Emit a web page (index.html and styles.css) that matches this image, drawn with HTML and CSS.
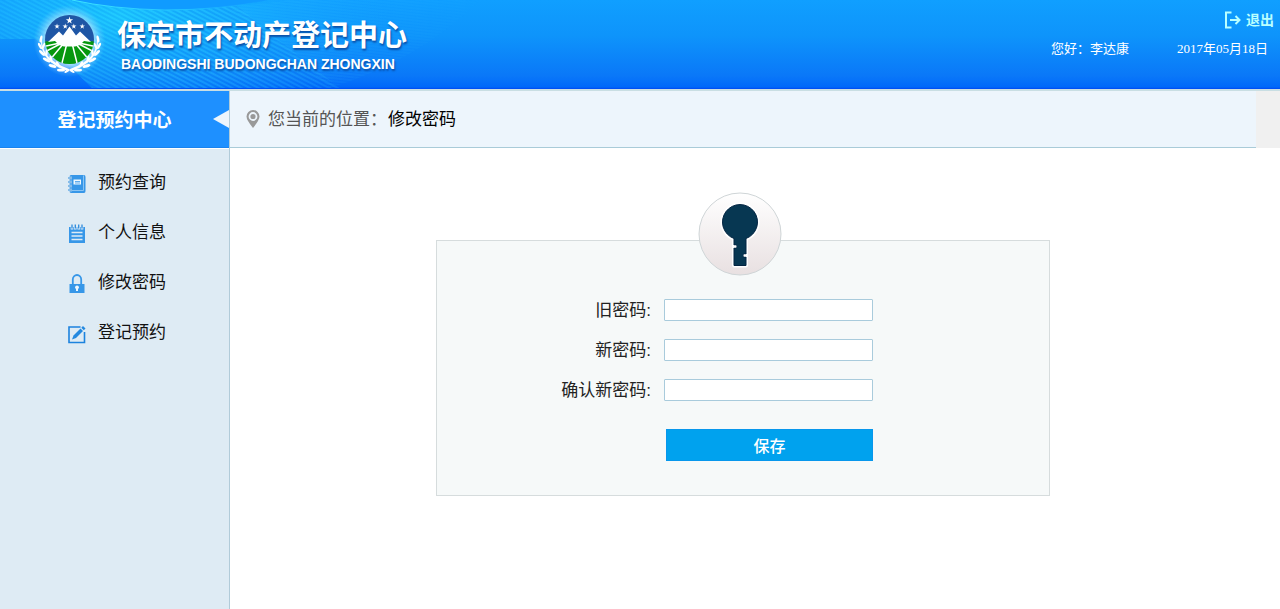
FILE: index.html
```html
<!DOCTYPE html>
<html lang="zh-CN">
<head>
<meta charset="utf-8">
<meta name="viewport" content="width=device-width, initial-scale=1">
<title>修改密码 - 保定市不动产登记中心</title>
<link rel="stylesheet" href="styles.css">
</head>
<body>
<header class="header">
  <svg class="header-art" width="520" height="88" viewBox="0 0 520 88" aria-hidden="true">
    <defs>
      <radialGradient id="glow" gradientUnits="userSpaceOnUse" cx="120" cy="30" r="270" gradientTransform="translate(0 4) scale(1 .42)">
        <stop offset="0" stop-color="#20d8ff" stop-opacity=".8"/>
        <stop offset=".5" stop-color="#18b4ff" stop-opacity=".5"/>
        <stop offset="1" stop-color="#18a0ff" stop-opacity="0"/>
      </radialGradient>
      <linearGradient id="fade" x1="0" x2="1" y1="0" y2="0">
        <stop offset="0" stop-color="#fff" stop-opacity=".5"/>
        <stop offset=".35" stop-color="#fff"/>
        <stop offset=".6" stop-color="#fff" stop-opacity=".7"/>
        <stop offset="1" stop-color="#fff" stop-opacity="0"/>
      </linearGradient>
      <linearGradient id="rim" x1="0" x2="1" y1="0" y2="0">
        <stop offset="0" stop-color="#3de4ff"/>
        <stop offset=".6" stop-color="#20c0ff"/>
        <stop offset="1" stop-color="#18a8ff" stop-opacity="0"/>
      </linearGradient>
      <pattern id="waves" width="8" height="4" patternUnits="userSpaceOnUse" patternTransform="rotate(27)">
        <path d="M0 1H8" stroke="#32d0ff" stroke-width="1" opacity=".5"/>
        <path d="M0 3H8" stroke="#0057e8" stroke-width="1" opacity=".3"/>
      </pattern>
      <pattern id="ripples" width="8" height="3" patternUnits="userSpaceOnUse" patternTransform="rotate(6)">
        <path d="M0 1H8" stroke="#32c8ff" stroke-width="1" opacity=".3"/>
      </pattern>
      <mask id="sweep"><rect width="520" height="88" fill="url(#fade)"/></mask>
    </defs>
    <path d="M0 0H480Q420 60 330 88H92Q60 56 35 39H0Z" fill="url(#glow)"/>
    <g mask="url(#sweep)">
      <path d="M0 0H230Q290 50 340 88H92Q60 56 35 39H0Z" fill="url(#waves)"/>
      <path d="M150 8Q240 8 290 0H480Q420 60 330 88Q290 50 230 8Z" fill="url(#ripples)"/>
    </g>
    <path d="M72 0Q112 9 165 10Q220 10 268 0Z" fill="#109bff"/>
    <path d="M72 0Q112 9 165 10Q220 10 268 0" fill="none" stroke="url(#rim)"/>
  </svg>
  <div class="brand">
    <svg class="logo" width="72" height="72" viewBox="0 0 72 72" role="img" aria-label="徽标">
      <defs>
        <clipPath id="disc"><circle cx="35.500" cy="34.500" r="24.500"/></clipPath>
        <radialGradient id="halo">
          <stop offset=".65" stop-color="#fff" stop-opacity=".6"/>
          <stop offset="1" stop-color="#8ae0ff" stop-opacity="0"/>
        </radialGradient>
      </defs>
      <circle cx="35.500" cy="36" r="36" fill="url(#halo)"/>
      <g clip-path="url(#disc)">
        <path d="M8 8H64V40H8Z" fill="#1f56a5"/>
        <path d="M8 37Q35 33 64 37V62H8Z" fill="#06970e"/>
        <g stroke="#fff" stroke-width="1.500" fill="none">
          <path d="M26 38L8 42M28 38L9 48M30 38L15 56M33 38L27 62M38 38L44 62M41 38L56 56M43 38L62 48M45 38L63 42"/>
        </g>
        <path d="M14 37L25 26.500L29 30.500L35.500 21.500L42 30.500L46 26.500L57 37L50 36L46 40L41 41.500H30L25 40L21 36Z" fill="#fff"/>
      </g>
      <g fill="#fff">
        <path id="star" d="M35.500 11.500L36.300 14.200H39.100L36.900 15.900L37.700 18.500L35.500 16.900L33.300 18.500L34.100 15.900L31.900 14.200H34.700Z"/>
        <use href="#star" transform="translate(-3.600 9.800) scale(.75)"/>
        <use href="#star" transform="translate(4.600 9.800) scale(.75)"/>
        <use href="#star" transform="translate(13.200 9.800) scale(.75)"/>
        <use href="#star" transform="translate(21.600 9.800) scale(.75)"/>
      </g>
      <g id="branch" fill="#fff">
        <path d="M8 34Q7 54 35 64L34 66Q6 57 7 34Z"/>
        <ellipse cx="7" cy="34" rx="1.300" ry="3.500" transform="rotate(12 7 34)"/>
        <ellipse cx="6" cy="41" rx="1.300" ry="3.500" transform="rotate(-28 6 41)"/>
        <ellipse cx="9.500" cy="41" rx="1.100" ry="3.500" transform="rotate(22 9.500 41)"/>
        <ellipse cx="8" cy="48" rx="1.500" ry="3.800" transform="rotate(-46 8 48)"/>
        <ellipse cx="12.500" cy="48" rx="1.200" ry="3.500" transform="rotate(5 12.500 48)"/>
        <ellipse cx="12.500" cy="55" rx="1.500" ry="4" transform="rotate(-62 12.500 55)"/>
        <ellipse cx="17" cy="54" rx="1.300" ry="3.500" transform="rotate(-12 17 54)"/>
        <ellipse cx="18.500" cy="61" rx="1.500" ry="4" transform="rotate(-75 18.500 61)"/>
        <ellipse cx="24" cy="59.500" rx="1.300" ry="3.500" transform="rotate(-26 24 59.500)"/>
        <ellipse cx="27" cy="65" rx="1.500" ry="4" transform="rotate(-90 27 65)"/>
        <ellipse cx="33" cy="66" rx="1.200" ry="3" transform="rotate(60 33 66)"/>
      </g>
      <use href="#branch" transform="translate(71 0) scale(-1 1)"/>
    </svg>
    <div class="brand-text">
      <h1 class="brand-name">保定市不动产登记中心</h1>
      <p class="brand-latin">BAODINGSHI BUDONGCHAN ZHONGXIN</p>
    </div>
  </div>
  <div class="account">
    <a class="logout" href="#">
      <svg width="17" height="18" viewBox="0 0 17 18" fill="none" stroke="#b9ffff" stroke-width="2" aria-hidden="true">
        <path d="M7.500 1.500H2V16.500H7.500M6 9H15M11.500 5L15.500 9L11.500 13"/>
      </svg>
      <span>退出</span>
    </a>
    <div class="account-info">
      <span>您好：李达康</span>
      <time datetime="2017-05-18">2017年05月18日</time>
    </div>
  </div>
</header>
<div class="layout">
  <aside class="sidebar">
    <h2 class="sidebar-title">登记预约中心
      <svg class="sidebar-arrow" width="16" height="18" viewBox="0 0 16 18" aria-hidden="true"><path d="M0 9L16 0V18Z" fill="#edf5fc"/></svg>
    </h2>
    <nav class="menu">
      <a class="menu-item" href="#">
        <svg class="menu-icon" width="18" height="20" viewBox="0 0 18 20" aria-hidden="true">
          <path d="M3 1H16Q17.500 1 17.500 3V17Q17.500 19 16 19H3Q1.500 19 1.500 17V3Q1.500 1 3 1Z" fill="#3797e8"/>
          <path d="M15.500 1.500V16.500H3" fill="none" stroke="#8ac4f3"/>
          <path d="M0 4H4M0 8H4M0 12H4M0 16H4" stroke="#deebf5" stroke-width="2.600"/>
          <path d="M0 4H4M0 8H4M0 12H4M0 16H4" stroke="#2d8bdc" stroke-width="1.200"/>
          <path d="M5.500 5.500H13V10.500H5.500Z" fill="#eef8ff"/>
          <path d="M7 7.500H12M7 9H12" stroke="#3797e8" stroke-width=".8"/>
        </svg>
        <span>预约查询</span>
      </a>
      <a class="menu-item" href="#">
        <svg class="menu-icon" width="18" height="20" viewBox="0 0 18 20" aria-hidden="true">
          <path d="M1 3H17V19H1Z" fill="#3797e8"/>
          <path d="M4 1V5.500M7.300 1V5.500M10.700 1V5.500M14 1V5.500" stroke="#deebf5" stroke-width="2.600"/>
          <path d="M4 .5V4.500M7.300 .5V4.500M10.700 .5V4.500M14 .5V4.500" stroke="#2d8bdc" stroke-width="1.300"/>
          <path d="M3.500 8.500H14.500M3.500 12H14.500M3.500 15.500H14.500" stroke="#deebf5" stroke-width="1.500"/>
        </svg>
        <span>个人信息</span>
      </a>
      <a class="menu-item" href="#">
        <svg class="menu-icon" width="18" height="20" viewBox="0 0 18 20" aria-hidden="true">
          <path d="M4.800 10V5.500A4.200 4.500 0 0 1 13.200 5.500V10" fill="none" stroke="#3797e8" stroke-width="1.800"/>
          <path d="M1.500 10H16.500V19H1.500Z" fill="#3797e8"/>
          <circle cx="9" cy="13.300" r="1.900" fill="#eef8ff"/>
          <path d="M9 13.500V17" stroke="#eef8ff" stroke-width="2"/>
        </svg>
        <span>修改密码</span>
      </a>
      <a class="menu-item" href="#">
        <svg class="menu-icon" width="18" height="20" viewBox="0 0 18 20" aria-hidden="true">
          <path d="M12.500 3H1V18.500H16.500V8" fill="none" stroke="#1c83de" stroke-width="1.600"/>
          <path d="M4 15.500L5.500 11.500L12.500 4.500L15 7L8 14Z" fill="#2489df"/>
          <path d="M13.300 3.700L15 2L17.500 4.500L15.800 6.200Z" fill="#2489df"/>
        </svg>
        <span>登记预约</span>
      </a>
    </nav>
  </aside>
  <main class="main">
    <div class="crumb-bar">
      <div class="crumbs">
        <svg width="14" height="20" viewBox="0 0 14 20" aria-hidden="true">
          <path d="M7 1A6.500 6.500 0 0 0 .5 7.500Q.5 11 7 19Q13.500 11 13.500 7.500A6.500 6.500 0 0 0 7 1Z" fill="#999"/>
          <circle cx="7" cy="7.500" r="3.500" fill="none" stroke="#edf5fc" stroke-width="1.800"/>
        </svg>
        <span class="crumb-label">您当前的位置：</span>
        <span class="crumb-current">修改密码</span>
      </div>
    </div>
    <div class="content">
      <form class="panel">
        <svg class="badge" width="84" height="84" viewBox="0 0 84 84" aria-hidden="true">
          <defs>
            <linearGradient id="plate" x1="0" x2="0" y1="0" y2="1">
              <stop offset="0" stop-color="#fff"/>
              <stop offset="1" stop-color="#e8e0e1"/>
            </linearGradient>
          </defs>
          <circle cx="42" cy="42" r="41" fill="url(#plate)" stroke="#cfd5d7"/>
          <path d="M36 46.500A17.500 17.500 0 1 1 48 46.500V73.500H36Z" fill="#073752" stroke="#fff" stroke-width="4" stroke-linejoin="round"/>
          <path d="M36 46.500A17.500 17.500 0 1 1 48 46.500V62H45.500V65H48V73.500H36V56H38.500V53H36Z" fill="#073752" stroke="#032442"/>
          <path d="M35 54.500H38.500M45.500 63.500H49" stroke="#fff" stroke-width="2"/>
        </svg>
        <label class="field-label" for="old">旧密码:</label>
        <input class="field" id="old" type="password">
        <label class="field-label" for="new">新密码:</label>
        <input class="field" id="new" type="password">
        <label class="field-label" for="confirm">确认新密码:</label>
        <input class="field" id="confirm" type="password">
        <button class="save" type="submit">保存</button>
      </form>
    </div>
  </main>
</div>
</body>
</html>
```
FILE: styles.css
```css
* {
  box-sizing: border-box;
}

body {
  margin: 0;
  min-height: 100vh;
  display: flex;
  flex-direction: column;
  background: #fff;
  color: #222;
  font-family: "Liberation Sans", "Noto Sans CJK SC", sans-serif;
  font-size: 17px;
}

h1, h2, p {
  margin: 0;
}

a {
  color: inherit;
  text-decoration: none;
}

svg {
  flex: none;
}

.header {
  position: relative;
  display: flex;
  justify-content: space-between;
  height: 91px;
  border-bottom: 2px solid #c9dee3;
  background: linear-gradient(#109fff 0, #0e94fb 40%, #0a78f8 85%, #0068fa 98%, #0050f5 99%);
  color: #fff;
}

.header-art {
  position: absolute;
  left: 0;
  top: 0;
}

.brand {
  position: relative;
  display: flex;
  gap: 11px;
  padding: 5px 0 0 34px;
}

.brand-text {
  padding-top: 12px;
  text-shadow: 1px 2px 2px #0a4fa8;
}

.brand-name {
  font-size: 29px;
  line-height: 38px;
  font-weight: 700;
}

.brand-latin {
  padding-left: 4px;
  font-size: 14px;
  line-height: 18px;
  font-weight: 700;
}

.account {
  position: relative;
  display: flex;
  flex-direction: column;
  align-items: flex-end;
  gap: 9px;
  padding: 10px 6px 0 0;
}

.logout {
  display: flex;
  align-items: center;
  gap: 5px;
  color: #b9ffff;
  font-size: 14px;
  line-height: 20px;
  font-weight: 700;
}

.account-info {
  display: flex;
  gap: 48px;
  padding-right: 6px;
  font-family: "Liberation Serif", "Noto Sans CJK SC", serif;
  font-size: 13px;
  line-height: 20px;
}

.layout {
  flex: 1;
  display: flex;
}

.sidebar {
  flex: none;
  width: 230px;
  border-right: 1px solid #b1cbd9;
  background: #deebf4;
}

.sidebar-title {
  display: flex;
  align-items: center;
  justify-content: center;
  position: relative;
  height: 58px;
  padding-bottom: 3px;
  border-bottom: 1px solid #fff;
  box-shadow: inset 0 -1px #1a83ee;
  background: #1e90ff;
  color: #fff;
  font-size: 19px;
  font-weight: 700;
}

.sidebar-arrow {
  position: absolute;
  right: 0;
  top: 19px;
}

.menu {
  display: flex;
  flex-direction: column;
  padding: 6px 0 0 68px;
}

.menu-item {
  display: flex;
  align-items: center;
  gap: 12px;
  height: 50px;
  color: #111;
}

.menu-icon {
  margin-top: 8px;
}

.main {
  flex: 1;
  min-width: 0;
}

.crumb-bar {
  padding-right: 24px;
  background: #f0f0f0;
}

.crumbs {
  display: flex;
  align-items: center;
  height: 57px;
  padding-left: 16px;
  border-bottom: 1px solid #a9cbd8;
  background: #edf5fc;
}

.crumb-label,
.crumb-current {
  padding-bottom: 3px;
}

.crumb-label {
  padding-left: 8px;
  color: #555;
}

.crumb-current {
  padding-left: 1px;
  color: #000;
}

.content {
  display: flex;
  justify-content: center;
  padding: 92px 24px 24px 0;
}

.panel {
  position: relative;
  display: grid;
  grid-template-columns: 214px 209px;
  column-gap: 13px;
  row-gap: 18px;
  align-items: center;
  width: 614px;
  padding: 58px 0 34px;
  border: 1px solid #d6dcdd;
  background: #f6f9f9;
}

.badge {
  position: absolute;
  left: 261px;
  top: -49px;
}

.field-label {
  padding-top: 2px;
  text-align: right;
  line-height: 20px;
}

.field {
  width: 100%;
  height: 22px;
  padding: 0 4px;
  border: 1px solid #a9cbdc;
  border-radius: 1px;
  background: #fff;
  font: inherit;
}

.save {
  grid-column: 2;
  height: 32px;
  margin: 10px 0 0 2px;
  padding: 0;
  border: 1px solid #0797ec;
  background: #00a2ee;
  color: #fff;
  font-family: inherit;
  font-size: 16px;
  font-weight: 500;
}
```
